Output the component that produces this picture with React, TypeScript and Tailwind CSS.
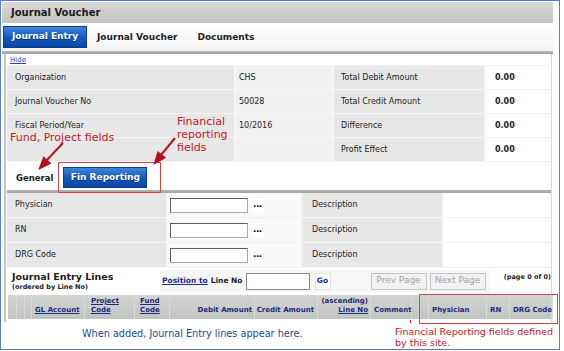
import React from "react";

/* ---------- data ---------- */
const summary = [
  ["Organization", "CHS", "Total Debit Amount", "0.00"],
  ["Journal Voucher No", "50028", "Total Credit Amount", "0.00"],
  ["Fiscal Period/Year", "10/2016", "Difference", "0.00"],
  ["", "", "Profit Effect", "0.00"],
];

const finFields = ["Physician", "RN", "DRG Code"];

type Col = { w: string; lines?: string[]; link?: number[]; pad?: string };

const lineCols: Col[] = [
  { w: "w-[9px]" },
  { w: "w-[8px]" },
  { w: "w-[7px]" },
  { w: "w-[53px]", lines: ["GL Account"], link: [0], pad: "pl-[3px]" },
  { w: "w-[50px]", lines: ["Project", "Code"], link: [0, 1], pad: "pl-[6px]" },
  { w: "w-[35px]", lines: ["Fund", "Code"], link: [0, 1], pad: "pl-[5px]" },
  { w: "w-[85px]", lines: ["Debit Amount"], pad: "pr-[2px] items-end text-right" },
  { w: "w-[63px]", lines: ["Credit Amount"], pad: "pr-[3px] items-end text-right" },
  { w: "w-[53px]", lines: ["(ascending)", "Line No"], link: [1], pad: "pr-[2px] items-end text-right" },
  { w: "w-[41px]", lines: ["Comment"], pad: "pl-[3px]" },
  { w: "w-[7px]" },
  { w: "w-[10px]" },
  { w: "w-[58px]", lines: ["Physician"], pad: "pl-[3px]" },
  { w: "w-[23px]", lines: ["RN"], pad: "pl-[3px]" },
  { w: "flex-1", lines: ["DRG Code"], pad: "pl-[3px]" },
];

/* ---------- small pieces ---------- */
function BlueTab({ label, className }: { label: string; className: string }) {
  return (
    <div
      className={`flex items-center justify-center border border-[#0b3c8c] bg-gradient-to-b from-[#3f86da] via-[#1559bf] to-[#0a46a6] text-[9px] font-bold text-white [text-shadow:0_1px_0_#08306e] ${className}`}
    >
      {label}
    </div>
  );
}

function Lookup() {
  return (
    <div className="flex items-center gap-[3px]">
      <div className="h-[15px] w-[78px] border border-t-[#5c5c5c] border-l-[#5c5c5c] border-r-[#a8a8a8] border-b-[#a8a8a8] bg-white" />
      <span className="bg-white px-[2px] pb-[3px] text-[9px] font-bold leading-[12px] tracking-[-0.5px] text-black">
        ...
      </span>
    </div>
  );
}

/* ---------- page ---------- */
export default function App() {
  return (
    <div className="relative h-[351px] w-[564px] overflow-hidden bg-white font-['DejaVu_Sans',sans-serif] text-[#222]">
      <div className="flex h-[350px] w-[560px] flex-col overflow-hidden border border-[#5b7bd2] pl-px pr-[6px] pt-px">
        {/* title bar */}
        <div className="flex h-[21px] shrink-0 items-center bg-gradient-to-b from-[#d8d8d4] to-[#c3c4c0] pl-[9px] text-[10px] font-bold text-[#1c1c1c]">
          Journal Voucher
        </div>

        {/* main tabs */}
        <div className="mt-[2px] flex h-[26px] shrink-0 items-start bg-gradient-to-b from-[#ffffff] to-[#f3f3f3] pl-px pt-px">
          <BlueTab label="Journal Entry" className="h-[22px] w-[84px]" />
          <span className="ml-[10px] mt-[5px] text-[9px] font-bold text-[#1c1c1c]">Journal Voucher</span>
          <span className="ml-[20px] mt-[5px] text-[9px] font-bold text-[#1c1c1c]">Documents</span>
        </div>
        <div className="h-[3px] shrink-0 bg-gradient-to-b from-[#b6b8b5] to-[#a2a4a1]" />

        {/* content box */}
        <div className="ml-[2px] mr-px flex shrink-0 flex-col border-l-2 border-r border-l-[#c6c6c6] border-r-[#d8d8d8] pb-[3px] pl-px">
          <div className="h-[11px] pl-[3px] pt-[2px] text-[7px] leading-[8px] text-[#1f3fbf] underline">
            Hide
          </div>

          {/* summary table */}
          <div className="grid grid-cols-[229px_98px_152px_1fr] border-t border-[#f4f4f4] text-[8px]">
            {summary.map((r, i) => (
              <React.Fragment key={i}>
                <div className="flex h-[24px] items-center border-b border-r-2 border-[#f7f7f7] bg-[#e7e7e7] pl-[8px]">{r[0]}</div>
                <div className="flex h-[24px] items-center border-b border-r-2 border-[#f7f7f7] bg-[#f1f1f1] pl-[3px]">{r[1]}</div>
                <div className="flex h-[24px] items-center border-b border-r-2 border-[#f7f7f7] bg-[#e7e7e7] pl-[7px]">{r[2]}</div>
                <div className="flex h-[24px] items-center border-b border-[#f0f0f0] bg-white pl-[9px] font-bold">{r[3]}</div>
              </React.Fragment>
            ))}
          </div>

          {/* sub tabs */}
          <div className="mt-[3px] flex h-[25px] items-start bg-white pt-[2px]">
            <span className="ml-[9px] mt-[5px] text-[8.5px] font-bold text-[#1c1c1c]">General</span>
            <BlueTab label="Fin Reporting" className="ml-[10px] h-[21px] w-[84px]" />
          </div>
          <div className="h-[3px] bg-gradient-to-b from-[#b3b3b3] to-[#a6a6a6]" />

          {/* fin reporting fields */}
          <div className="grid grid-cols-[161px_135px_141px_1fr] text-[8px]">
            {finFields.map((f) => (
              <React.Fragment key={f}>
                <div className="flex h-[25px] items-center border-b border-r-2 border-[#f7f7f7] bg-[#e7e7e7] pl-[8px]">{f}</div>
                <div className="flex h-[25px] items-center border-b border-r-2 border-[#f0f0f0] bg-[#fafafa] pl-[2px]">
                  <Lookup />
                </div>
                <div className="flex h-[25px] items-center border-b border-r-2 border-[#f7f7f7] bg-[#e7e7e7] pl-[9px]">Description</div>
                <div className="h-[25px] border-b border-[#f0f0f0] bg-white" />
              </React.Fragment>
            ))}
          </div>

          {/* journal entry lines toolbar */}
          <div className="ml-px mt-[2px] flex h-[22px] gap-[3px]">
            <div className="flex w-[149px] flex-col bg-white pl-[4px] pt-px">
              <span className="text-[9.5px] font-bold leading-[12px] text-[#1c1c1c]">Journal Entry Lines</span>
              <span className="text-[6.5px] font-bold leading-[8px] text-[#1c1c1c]">(ordered by Line No)</span>
            </div>
            <div className="flex w-[330px] items-center bg-[#f6f6f6] pl-[2px]">
              <span className="text-[7.5px] font-bold text-[#1b2a8c] underline">Position to</span>
              <span className="ml-[3px] text-[7.5px] font-bold text-[#1c1c1c]">Line No</span>
              <div className="ml-[3px] h-[17px] w-[64px] border border-[#8a8a8a] bg-white" />
              <div className="ml-[5px] flex h-[17px] w-[16px] items-center justify-center border border-[#e2e2e2] bg-white text-[7.5px] font-bold text-[#1b2a9c]">
                Go
              </div>
              <div className="ml-[40px] flex h-[17px] w-[56px] items-center justify-center border border-[#c4c4c4] bg-[#f2f2f2] text-[9px] text-[#a3a3a3]">
                Prev Page
              </div>
              <div className="ml-[3px] flex h-[17px] w-[56px] items-center justify-center border border-[#c4c4c4] bg-[#f2f2f2] text-[9px] text-[#a3a3a3]">
                Next Page
              </div>
            </div>
            <div className="flex flex-1 justify-end bg-white pt-[3px] text-[6.5px] font-bold text-[#1c1c1c]">
              (page 0 of 0)
            </div>
          </div>

          {/* column headings */}
          <div className="ml-px mt-[3px] flex h-[24px] bg-gradient-to-b from-[#d3d5d3] to-[#c2c4c2]">
            {lineCols.map((c, i) => (
              <div
                key={i}
                className={`flex shrink-0 flex-col justify-end whitespace-nowrap border-r border-[#d9dad9] pb-[4px] text-[7px] font-bold leading-[9px] text-[#1b2a7a] ${c.w} ${c.pad ?? ""}`}
              >
                {c.lines?.map((l, j) => (
                  <span key={j} className={c.link?.includes(j) ? "underline" : ""}>
                    {l}
                  </span>
                ))}
              </div>
            ))}
          </div>
        </div>

        {/* footer notes */}
        <div className="mr-[-6px] grid grid-cols-[393px_1fr]">
          <div className="mt-[6px] pl-[80px] text-[9.7px] leading-[12px] text-[#1a4a9c]">
            When added, Journal Entry lines appear here.
          </div>
          <div className="mt-[4px] whitespace-nowrap text-[9.5px] leading-[11px] text-[#c4161c]">
            Financial Reporting fields defined
            <br />
            by this site.
          </div>
        </div>
      </div>

      {/* annotations */}
      <div className="absolute left-[177px] top-[115px] text-[11px] leading-[13px] text-[#c4161c]">
        Financial
        <br />
        reporting
        <br />
        fields
      </div>
      <div className="absolute left-[10px] top-[131px] text-[11px] leading-[13px] text-[#c4161c]">
        Fund, Project fields
      </div>
      <div className="absolute left-[58px] top-[162px] h-[31px] w-[103px] border-[1.5px] border-[#d4404a]" />
      <div className="absolute left-[419px] top-[294px] h-[30px] w-[139px] border-[1.5px] border-[#d4404a]" />
      <div className="absolute left-[410px] top-[320px] h-[3px] w-px bg-[#c4161c]" />
      <svg className="pointer-events-none absolute left-0 top-0" width="564" height="351">
        <g stroke="#b3121a" strokeWidth="2" fill="#b3121a">
          <line x1="63" y1="143" x2="46" y2="161" />
          <polygon points="40,168 49.7,163.3 43.9,157.9" />
          <line x1="175" y1="138" x2="161" y2="155" />
          <polygon points="155,163 164.4,157.7 158.1,152.7" />
        </g>
      </svg>
    </div>
  );
}
